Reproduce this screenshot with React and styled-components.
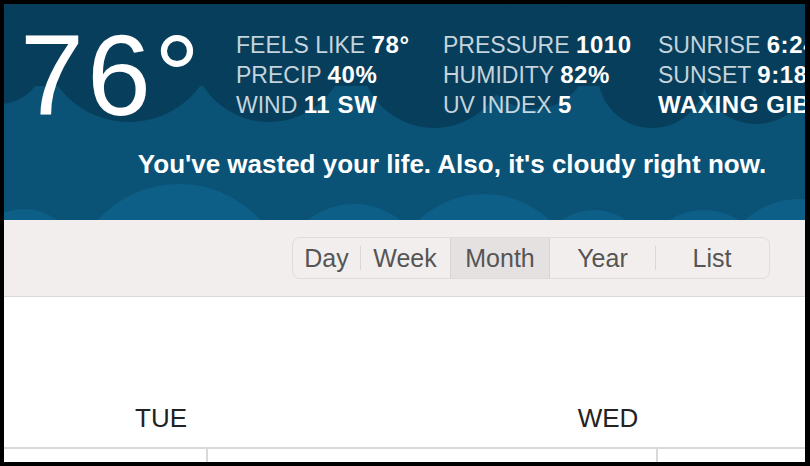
import React from "react";
import styled, { createGlobalStyle } from "styled-components";

const GlobalStyle = createGlobalStyle`
  html, body { margin: 0; padding: 0; background: #000; }
  * { box-sizing: border-box; }
`;

const Frame = styled.div`
  width: 810px;
  height: 466px;
  padding: 4px 5px 4px 4px;
  background: #000;
`;

const Window = styled.div`
  height: 100%;
  display: flex;
  flex-direction: column;
  background: #fff;
  overflow: hidden;
  font-family: "Liberation Sans", Arial, sans-serif;
`;

const Header = styled.header`
  position: relative;
  flex: none;
  height: 216px;
  overflow: hidden;
  background: #0a5276;
`;

const Clouds = styled.svg`
  position: absolute;
  inset: 0;
  width: 100%;
  height: 100%;
`;

const HeaderContent = styled.div`
  position: relative;
  display: flex;
  flex-direction: column;
  padding: 14px 0 0 16px;
`;

const TopRow = styled.div`
  display: flex;
  align-items: flex-start;
`;

const Temp = styled.div`
  flex: none;
  width: 216px;
  font-size: 115px;
  line-height: 114px;
  letter-spacing: 3px;
  color: #fff;
  font-weight: 400;
`;

const Stats = styled.div`
  display: grid;
  grid-template-columns: 207px 215px 200px;
  margin-top: 12px;
  font-size: 23px;
  line-height: 30px;
  white-space: nowrap;
`;

const Stat = styled.div`
  color: rgba(225, 234, 240, 0.88);
  b {
    color: #fff;
    font-weight: 700;
    font-size: 24px;
    letter-spacing: 0.6px;
  }
`;

const Message = styled.div`
  margin-top: 17px;
  padding-left: 79px;
  text-align: center;
  color: #fff;
  font-weight: 700;
  font-size: 26px;
  line-height: 30px;
  white-space: nowrap;
`;

const Toolbar = styled.div`
  flex: none;
  height: 77px;
  background: #f2eeee;
  border-bottom: 1px solid #dcd8d8;
  display: flex;
  align-items: center;
  justify-content: flex-end;
  padding-right: 35px;
`;

const Segmented = styled.div`
  display: flex;
  height: 42px;
  border: 1px solid #e0dcdc;
  border-radius: 8px;
  overflow: hidden;
`;

const Segment = styled.div`
  position: relative;
  width: ${(p) => p.$w}px;
  display: flex;
  align-items: center;
  justify-content: center;
  font-size: 25px;
  color: #555;
  background: ${(p) => (p.$active ? "#e6e1e1" : "transparent")};
  border-left: ${(p) => (p.$active ? "1px solid #dad5d5" : "none")};
  border-right: ${(p) => (p.$active ? "1px solid #dad5d5" : "none")};
  &::before {
    content: "";
    display: ${(p) => (p.$divider ? "block" : "none")};
    position: absolute;
    left: 0;
    top: 8px;
    bottom: 8px;
    width: 1px;
    background: #dcd7d7;
  }
`;

const Calendar = styled.div`
  flex: 1;
  display: flex;
  flex-direction: column;
`;

const DayHeads = styled.div`
  flex: none;
  height: 152px;
  display: flex;
  align-items: flex-end;
  border-bottom: 2px solid #d9d9d9;
`;

const DayHead = styled.div`
  flex: none;
  width: ${(p) => p.$w}px;
  text-align: center;
  font-size: 26px;
  line-height: 30px;
  padding-bottom: 14px;
  color: #222;
`;

const DayRow = styled.div`
  flex: 1;
  display: flex;
`;

const DayCell = styled.div`
  flex: ${(p) => (p.$w ? "none" : "1")};
  width: ${(p) => (p.$w ? `${p.$w}px` : "auto")};
  border-right: ${(p) => (p.$w ? "2px solid #d9d9d9" : "none")};
`;

const DARK = "#063e5b";
const LIGHT = "#0d5f87";

const CloudArt = () => (
  <Clouds viewBox="0 0 801 216" preserveAspectRatio="none">
    <rect x="0" y="0" width="801" height="82" fill={DARK} />
    <circle cx="-5" cy="55" r="45" fill={DARK} />
    <circle cx="125" cy="30" r="88" fill={DARK} />
    <circle cx="265" cy="40" r="78" fill={DARK} />
    <circle cx="430" cy="50" r="74" fill={DARK} />
    <circle cx="530" cy="50" r="55" fill={DARK} />
    <circle cx="648" cy="70" r="54" fill={DARK} />
    <circle cx="752" cy="65" r="55" fill={DARK} />
    <circle cx="20" cy="260" r="55" fill={LIGHT} />
    <circle cx="175" cy="290" r="110" fill={LIGHT} />
    <circle cx="350" cy="275" r="75" fill={LIGHT} />
    <circle cx="480" cy="285" r="95" fill={LIGHT} />
    <circle cx="590" cy="262" r="56" fill={LIGHT} />
    <circle cx="700" cy="272" r="66" fill={LIGHT} />
    <circle cx="795" cy="275" r="80" fill={LIGHT} />
  </Clouds>
);

const stats = [
  ["FEELS LIKE", "78°"],
  ["PRESSURE", "1010"],
  ["SUNRISE", "6:24 AM"],
  ["PRECIP", "40%"],
  ["HUMIDITY", "82%"],
  ["SUNSET", "9:18 PM"],
  ["WIND", "11 SW"],
  ["UV INDEX", "5"],
  ["", "WAXING GIBBOUS"],
];

const segments = [
  { label: "Day", w: 67 },
  { label: "Week", w: 90, divider: true },
  { label: "Month", w: 100, active: true },
  { label: "Year", w: 105 },
  { label: "List", w: 114, divider: true },
];

export default function App() {
  return (
    <>
      <GlobalStyle />
      <Frame>
        <Window>
          <Header>
            <CloudArt />
            <HeaderContent>
              <TopRow>
                <Temp>76°</Temp>
                <Stats>
                  {stats.map(([label, value], i) => (
                    <Stat key={i}>
                      {label ? `${label} ` : ""}
                      <b>{value}</b>
                    </Stat>
                  ))}
                </Stats>
              </TopRow>
              <Message>You've wasted your life. Also, it's cloudy right now.</Message>
            </HeaderContent>
          </Header>
          <Toolbar>
            <Segmented>
              {segments.map((s) => (
                <Segment key={s.label} $w={s.w} $active={s.active} $divider={s.divider}>
                  {s.label}
                </Segment>
              ))}
            </Segmented>
          </Toolbar>
          <Calendar>
            <DayHeads>
              <DayHead $w={314}>TUE</DayHead>
              <DayHead $w={580}>WED</DayHead>
            </DayHeads>
            <DayRow>
              <DayCell $w={204} />
              <DayCell $w={450} />
              <DayCell />
            </DayRow>
          </Calendar>
        </Window>
      </Frame>
    </>
  );
}
